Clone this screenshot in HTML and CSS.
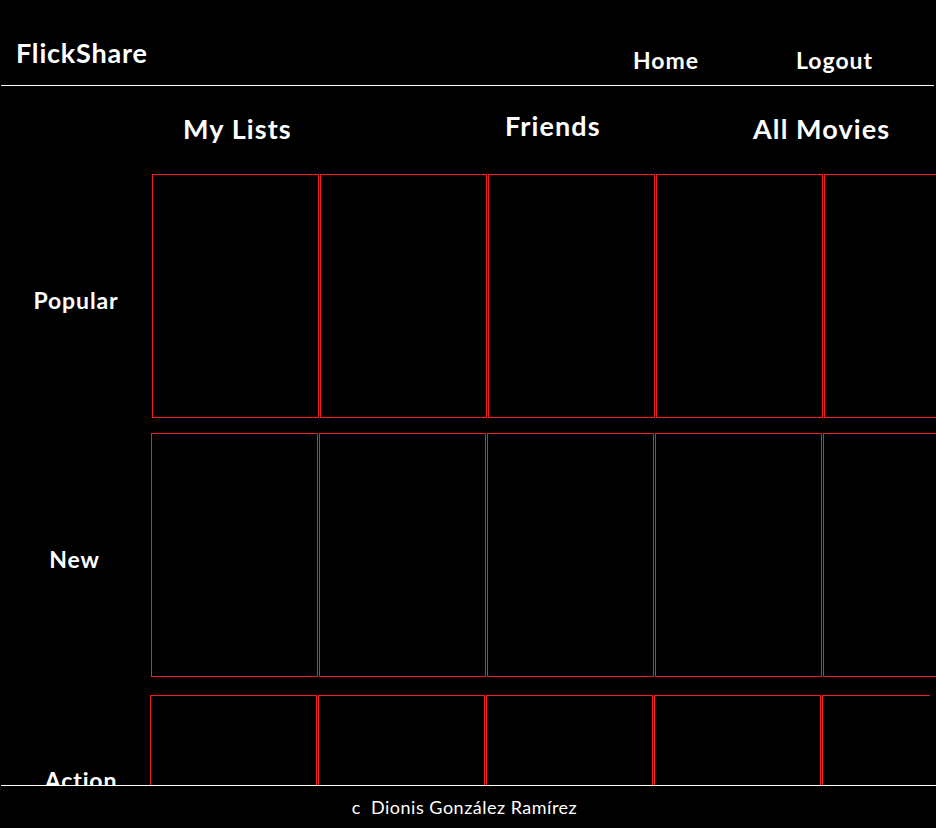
FILE: index.html
```html
<!DOCTYPE html>
<html lang="es">
<head>
<meta charset="utf-8">
<title>FlickShare</title>
<link rel="stylesheet" href="styles.css">
</head>
<body>
<header class="topbar">
  <div class="logo">FlickShare</div>
  <nav class="toplinks">
    <a class="toplink home" href="#">Home</a>
    <a class="toplink logout" href="#">Logout</a>
  </nav>
</header>
<nav class="sections">
  <a class="section mylists" href="#">My Lists</a>
  <a class="section friends" href="#">Friends</a>
  <a class="section allmovies" href="#">All Movies</a>
</nav>
<main class="rows">
  <section class="row row-popular">
    <div class="label">Popular</div>
    <div class="cards">
      <div class="card"></div><div class="card"></div><div class="card"></div><div class="card"></div><div class="card"></div>
    </div>
  </section>
  <section class="row row-new">
    <div class="label">New</div>
    <div class="cards">
      <div class="card"></div><div class="card"></div><div class="card"></div><div class="card"></div><div class="card"></div>
    </div>
  </section>
  <section class="row row-action">
    <div class="label">Action</div>
    <div class="cards">
      <div class="card"></div><div class="card"></div><div class="card"></div><div class="card"></div><div class="card"></div>
    </div>
  </section>
</main>
<footer class="footer">c&nbsp; Dionis González Ramírez</footer>
</body>
</html>
```
FILE: styles.css
```css
html, body {
  margin: 0;
  padding: 0;
  background: #000;
  color: #fff;
  font-family: Lato, "Open Sans", sans-serif;
  overflow: hidden;
  height: 100%;
}
a { color: #fff; text-decoration: none; }

.topbar {
  display: flex;
  align-items: flex-start;
  height: 86px;
  box-sizing: border-box;
  width: 933px;
  margin-left: 1px;
  border-bottom: 1px solid #fff;
}
.logo {
  flex: none;
  width: 632px;
  font-weight: 700;
  font-size: 27px;
  letter-spacing: 0.8px;
  margin-top: 36px;
  padding-left: 15px;
  box-sizing: border-box;
  white-space: nowrap;
}
.toplinks {
  display: flex;
}
.toplink {
  font-weight: 700;
  font-size: 23px;
  letter-spacing: 1px;
  margin-top: 46px;
  white-space: nowrap;
}
.home { width: 163px; }
.logout { width: 138px; }

.sections {
  display: flex;
  height: 88px;
  box-sizing: border-box;
  padding-left: 183px;
}
.section {
  font-weight: 700;
  font-size: 27px;
  letter-spacing: 1.1px;
  white-space: nowrap;
}
.mylists { width: 322px; margin-top: 26px; }
.friends { width: 248px; margin-top: 23px; }
.allmovies { margin-top: 26px; }

.rows {
  display: flex;
  flex-direction: column;
}
.row {
  display: flex;
  height: 244px;
  flex: none;
}
.row-new { margin-top: 15px; }
.row-action { margin-top: 18px; }
.label {
  flex: none;
  width: 152px;
  display: flex;
  align-items: center;
  justify-content: center;
  padding-top: 7px;
  box-sizing: border-box;
  font-weight: 700;
  font-size: 23px;
  letter-spacing: 0.9px;
}
.row-new .label { width: 151px; padding-right: 2px; }
.row-action .label {
  width: 150px;
  padding-left: 12px;
  padding-top: 71px;
  align-items: flex-start;
}
.cards {
  display: flex;
  gap: 1px;
  flex: none;
}
.row-action .cards {
  width: 780px;
  overflow: hidden;
}
.card {
  flex: none;
  width: 167px;
  height: 244px;
  box-sizing: border-box;
  border: 1px solid #ff1a1a;
}

.footer {
  position: fixed;
  left: 1px;
  right: 0;
  bottom: 0;
  height: 43px;
  box-sizing: border-box;
  border-top: 1px solid #fff;
  background: #000;
  text-align: center;
  padding-top: 10px;
  padding-right: 8px;
  font-size: 18px;
  letter-spacing: 0.5px;
  white-space: nowrap;
}
```
